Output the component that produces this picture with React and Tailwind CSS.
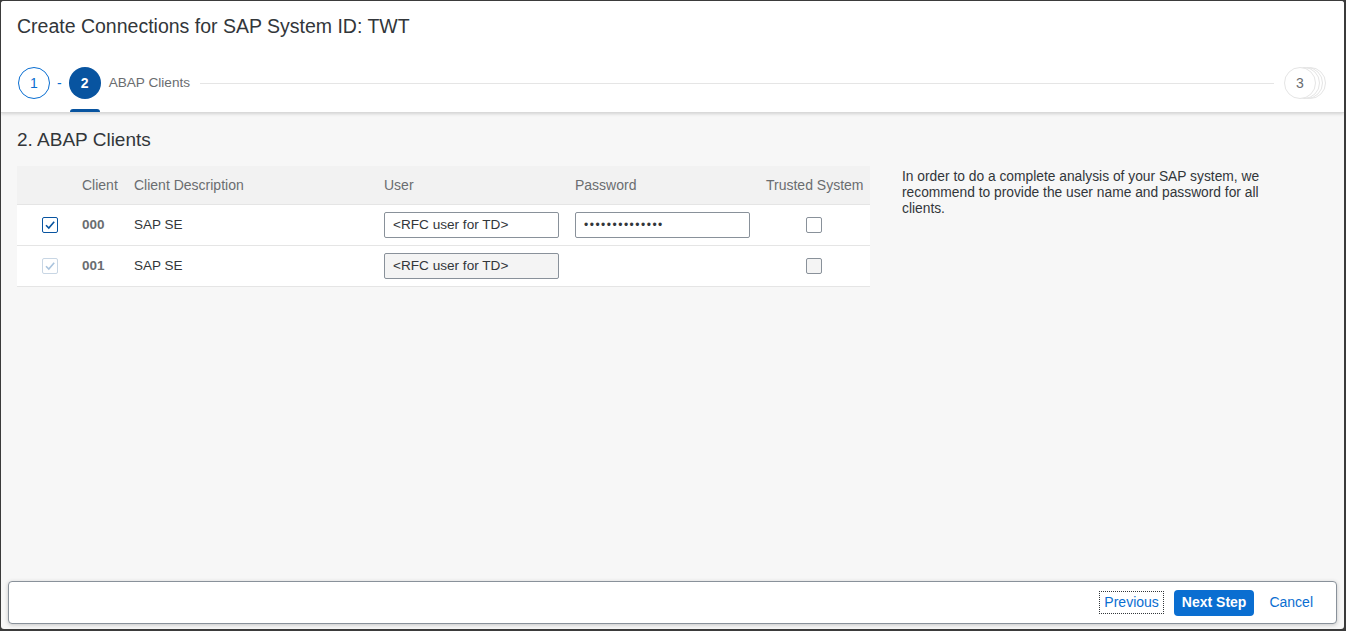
import { useState } from 'react';

const font = { fontFamily: '"Liberation Sans", Arial, sans-serif' };

function CheckMark({ color }) {
  return (
    <svg width="12" height="12" viewBox="0 0 12 12">
      <path d="M2 6.2 L4.8 9 L10.2 2.8" fill="none" stroke={color} strokeWidth="1.6" />
    </svg>
  );
}

function Stepper() {
  return (
    <div className="flex items-center h-[66px] pt-[8px] px-[17px] relative">
      <div className="w-8 h-8 rounded-full border border-[#0a6ed1] text-[#0a6ed1] flex items-center justify-center text-[14px]">1</div>
      <span className="mx-[7px] text-[#0a6ed1] text-[14px]">-</span>
      <div className="relative h-full flex items-center">
        <div className="w-8 h-8 rounded-full bg-[#0854a0] text-white flex items-center justify-center text-[14px] font-bold">2</div>
        <div className="absolute left-[1px] right-[1px] bottom-0 h-[3px] bg-[#0854a0] rounded-t-sm" />
      </div>
      <span className="ml-2 text-[13.6px] text-[#6a6d70]">ABAP Clients</span>
      <div className="flex-1 h-px bg-[#e5e5e5] mx-[10px]" />
      <div className="relative w-[43px] h-8 shrink-0">
        <div className="absolute left-[10px] top-0 w-8 h-8 rounded-full border border-[#e5e5e5] bg-white" />
        <div className="absolute left-[7px] top-0 w-8 h-8 rounded-full border border-[#e5e5e5] bg-white" />
        <div className="absolute left-[4px] top-0 w-8 h-8 rounded-full border border-[#e5e5e5] bg-white" />
        <div className="absolute left-0 top-0 w-8 h-8 rounded-full border border-[#e5e5e5] bg-white flex items-center justify-center text-[14px] text-[#6a6d70]">3</div>
      </div>
    </div>
  );
}

export default function App() {
  const [rows] = useState([
    { id: '000', desc: 'SAP SE', user: '<RFC user for TD>', pwd: '••••••••••••••', enabled: true },
    { id: '001', desc: 'SAP SE', user: '<RFC user for TD>', pwd: null, enabled: false },
  ]);

  return (
    <div className="w-[1346px] h-[631px] bg-[#3b3b3b] pl-px pt-px" style={font}>
      <div className="w-[1343px] h-[628px] bg-[#f7f7f7] rounded-[3px] overflow-hidden flex flex-col relative">
        {/* Header */}
        <div className="bg-white shadow-[0_1px_3px_rgba(0,0,0,0.15)] border-b border-[#d9d9d9] z-10">
          <div className="h-[45px] flex items-end px-[16px] pb-[10px]">
            <h1 className="text-[19.5px] text-[#32363a] leading-none">Create Connections for SAP System ID: TWT</h1>
          </div>
          <Stepper />
        </div>

        {/* Content */}
        <div className="flex-1 px-[16px] pt-[17px]">
          <h2 className="text-[19px] text-[#32363a] leading-none mb-[17px]">2. ABAP Clients</h2>
          <div className="flex gap-[32px]">
            <div className="w-[853px] text-[#32363a]">
              <div className="flex items-center h-[39px] bg-[#f2f2f2] border-b border-[#e5e5e5] text-[14px] text-[#6a6d70] whitespace-nowrap">
                <div className="w-[65px]" />
                <div className="w-[52px]">Client</div>
                <div className="w-[250px]">Client Description</div>
                <div className="w-[191px]">User</div>
                <div className="w-[191px]">Password</div>
                <div className="w-[96px]">Trusted System</div>
              </div>
              {rows.map((r) => (
                <div key={r.id} className="flex items-center h-[41px] bg-white border-b border-[#e5e5e5] text-[13.5px]">
                  <div className="w-[65px] flex justify-center pl-[1px]">
                    <div className={`w-4 h-4 rounded-[2px] border flex items-center justify-center ${r.enabled ? 'border-[#0854a0]' : 'border-[#c8d6e4]'}`}>
                      <CheckMark color={r.enabled ? '#0854a0' : '#a9c3dd'} />
                    </div>
                  </div>
                  <div className="w-[52px] font-bold text-[#6a6d70]">{r.id}</div>
                  <div className="w-[250px]">{r.desc}</div>
                  <div className="w-[191px]">
                    <div className={`w-[175px] h-[26px] border border-[#89919a] rounded-[2px] px-2 flex items-center text-[13.6px] ${r.enabled ? 'bg-white' : 'bg-[#f4f4f4]'}`}>
                      {r.user}
                    </div>
                  </div>
                  <div className="w-[191px]">
                    {r.pwd && (
                      <div className="w-[175px] h-[26px] border border-[#89919a] rounded-[2px] px-2 flex items-center text-[12px] tracking-[1.5px]">
                        {r.pwd}
                      </div>
                    )}
                  </div>
                  <div className="w-[96px] flex justify-center">
                    <div className={`w-4 h-4 rounded-[2px] border border-[#89919a] ${r.enabled ? 'bg-white' : 'bg-[#f4f4f4]'}`} />
                  </div>
                </div>
              ))}
            </div>
            <p className="w-[372px] pt-[3px] text-[13.8px] leading-[16px] text-[#32363a]">
              In order to do a complete analysis of your SAP system, we recommend to provide the user name and password for all clients.
            </p>
          </div>
        </div>

        {/* Footer */}
        <div className="px-[7px] pb-[5px]">
          <div className="h-[43px] bg-white border border-[#89919a] rounded-[4px] shadow-[0_1px_4px_rgba(0,0,0,0.2)] flex items-center justify-end pr-[15px] text-[14px]">
            <button className="h-[23px] px-[4px] text-[#0a6ed1] border border-dotted border-[#32363a]">Previous</button>
            <button className="h-[26px] px-[8px] ml-[10px] bg-[#0a6ed1] text-white font-bold rounded-[4px]">Next Step</button>
            <button className="h-[26px] px-[8px] ml-[7px] text-[#0a6ed1]">Cancel</button>
          </div>
        </div>
      </div>
    </div>
  );
}
